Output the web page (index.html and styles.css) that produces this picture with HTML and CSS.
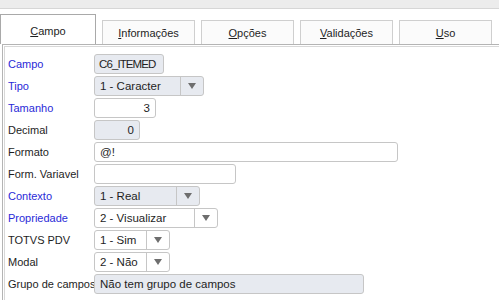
FILE: index.html
```html
<html>
  <head>
    <title>Campo</title>
    <link rel="stylesheet" href="styles.css">
  </head>
  <body>
    <!-- Faixa superior -->
    <div class="topbar"></div>
    <!-- Abas -->
    <div class="tabs">
      <div class="tab active"><u>C</u>ampo</div>
      <div class="tab"><u>I</u>nformações</div>
      <div class="tab"><u>O</u>pções</div>
      <div class="tab"><u>V</u>alidações</div>
      <div class="tab"><u>U</u>so</div>
    </div>
    <!-- Painel do campo -->
    <div class="panel">
      <div class="row">
        <span class="label req">Campo</span>
        <div class="field ro w-campo">C6_ITEMED</div>
      </div>
      <div class="row">
        <span class="label req">Tipo</span>
        <div class="field ro select w-tipo"><span class="val">1 - Caracter</span><span class="arrow"></span></div>
      </div>
      <div class="row">
        <span class="label req">Tamanho</span>
        <div class="field num w-tam">3</div>
      </div>
      <div class="row">
        <span class="label">Decimal</span>
        <div class="field ro num w-dec">0</div>
      </div>
      <div class="row">
        <span class="label">Formato</span>
        <div class="field w-formato">@!</div>
      </div>
      <div class="row">
        <span class="label">Form. Variavel</span>
        <div class="field w-var"></div>
      </div>
      <div class="row">
        <span class="label req">Contexto</span>
        <div class="field ro select w-ctx"><span class="val">1 - Real</span><span class="arrow"></span></div>
      </div>
      <div class="row">
        <span class="label req">Propriedade</span>
        <div class="field select w-prop"><span class="val">2 - Visualizar</span><span class="arrow"></span></div>
      </div>
      <div class="row">
        <span class="label">TOTVS PDV</span>
        <div class="field select w-pdv"><span class="val">1 - Sim</span><span class="arrow"></span></div>
      </div>
      <div class="row">
        <span class="label">Modal</span>
        <div class="field select w-pdv"><span class="val">2 - Não</span><span class="arrow"></span></div>
      </div>
      <div class="row">
        <span class="label">Grupo de campos</span>
        <div class="field ro w-grupo">Não tem grupo de campos</div>
      </div>
    </div>
  </body>
</html>
```

FILE: styles.css
```css
/* Base */
body {
  margin: 0;
  font-family: "Liberation Sans", Arial, sans-serif;
  font-size: 11px;
  color: #1e1e1e;
  background: #ffffff;
}

/* Faixa cinza no topo */
.topbar {
  height: 8px;
  background: #ececec;
  border-bottom: 1px solid #d6d6d6;
}

/* Abas */
.tabs {
  display: flex;
  align-items: flex-end;
  gap: 6px;
  height: 35px;
}
.tab {
  box-sizing: border-box;
  width: 93px;
  height: 24px;
  border: 1px solid #cfcfcf;
  border-bottom: none;
  background: #fbfbfb;
  text-align: center;
  padding-top: 6px;
}
.tab.active {
  width: 96px;
  height: 30px;
  border-color: #a9a9a9;
  background: #ffffff;
  padding-top: 10px;
}

/* Painel */
.panel {
  margin-left: 2px;
  border-top: 1px solid #b4b4b4;
  border-left: 1px solid #b4b4b4;
  box-shadow: inset 1px 1px 0 #ffffff, inset 2px 2px 0 #d8d8d8;
  padding: 9px 0 10px 5px;
  display: flex;
  flex-direction: column;
  gap: 2px;
}
.row {
  display: flex;
  align-items: center;
  height: 20px;
}
.label {
  width: 86px;
  flex: none;
  white-space: nowrap;
}
.label.req {
  color: #2a2ad8;
}

/* Campos */
.field {
  box-sizing: border-box;
  height: 20px;
  border: 1px solid #c6c6c6;
  border-radius: 3px;
  background: #ffffff;
  padding: 0 5px;
  line-height: 18px;
  font-size: 11.5px;
  white-space: nowrap;
  overflow: hidden;
}
.field.ro {
  background: #e7eaf0;
}
.field.num {
  text-align: right;
}
.field.select {
  display: flex;
  padding-right: 0;
}
.field.select .val {
  flex: 1;
}
.field.select .arrow {
  width: 22px;
  border-left: 1px solid #c6c6c6;
  display: flex;
  align-items: center;
  justify-content: center;
}
.field.select .arrow::after {
  content: "";
  border-left: 4px solid transparent;
  border-right: 4px solid transparent;
  border-top: 6px solid #6e6e6e;
}

/* Larguras */
.w-campo {
  width: 70px;
  padding: 0 4px;
  letter-spacing: -0.9px;
}
.w-tipo { width: 110px; }
.w-tam { width: 62px; }
.w-dec { width: 46px; }
.w-formato { width: 304px; }
.w-var { width: 142px; }
.w-ctx { width: 106px; }
.w-prop { width: 124px; }
.w-pdv { width: 76px; }
.w-grupo { width: 270px; }
```
